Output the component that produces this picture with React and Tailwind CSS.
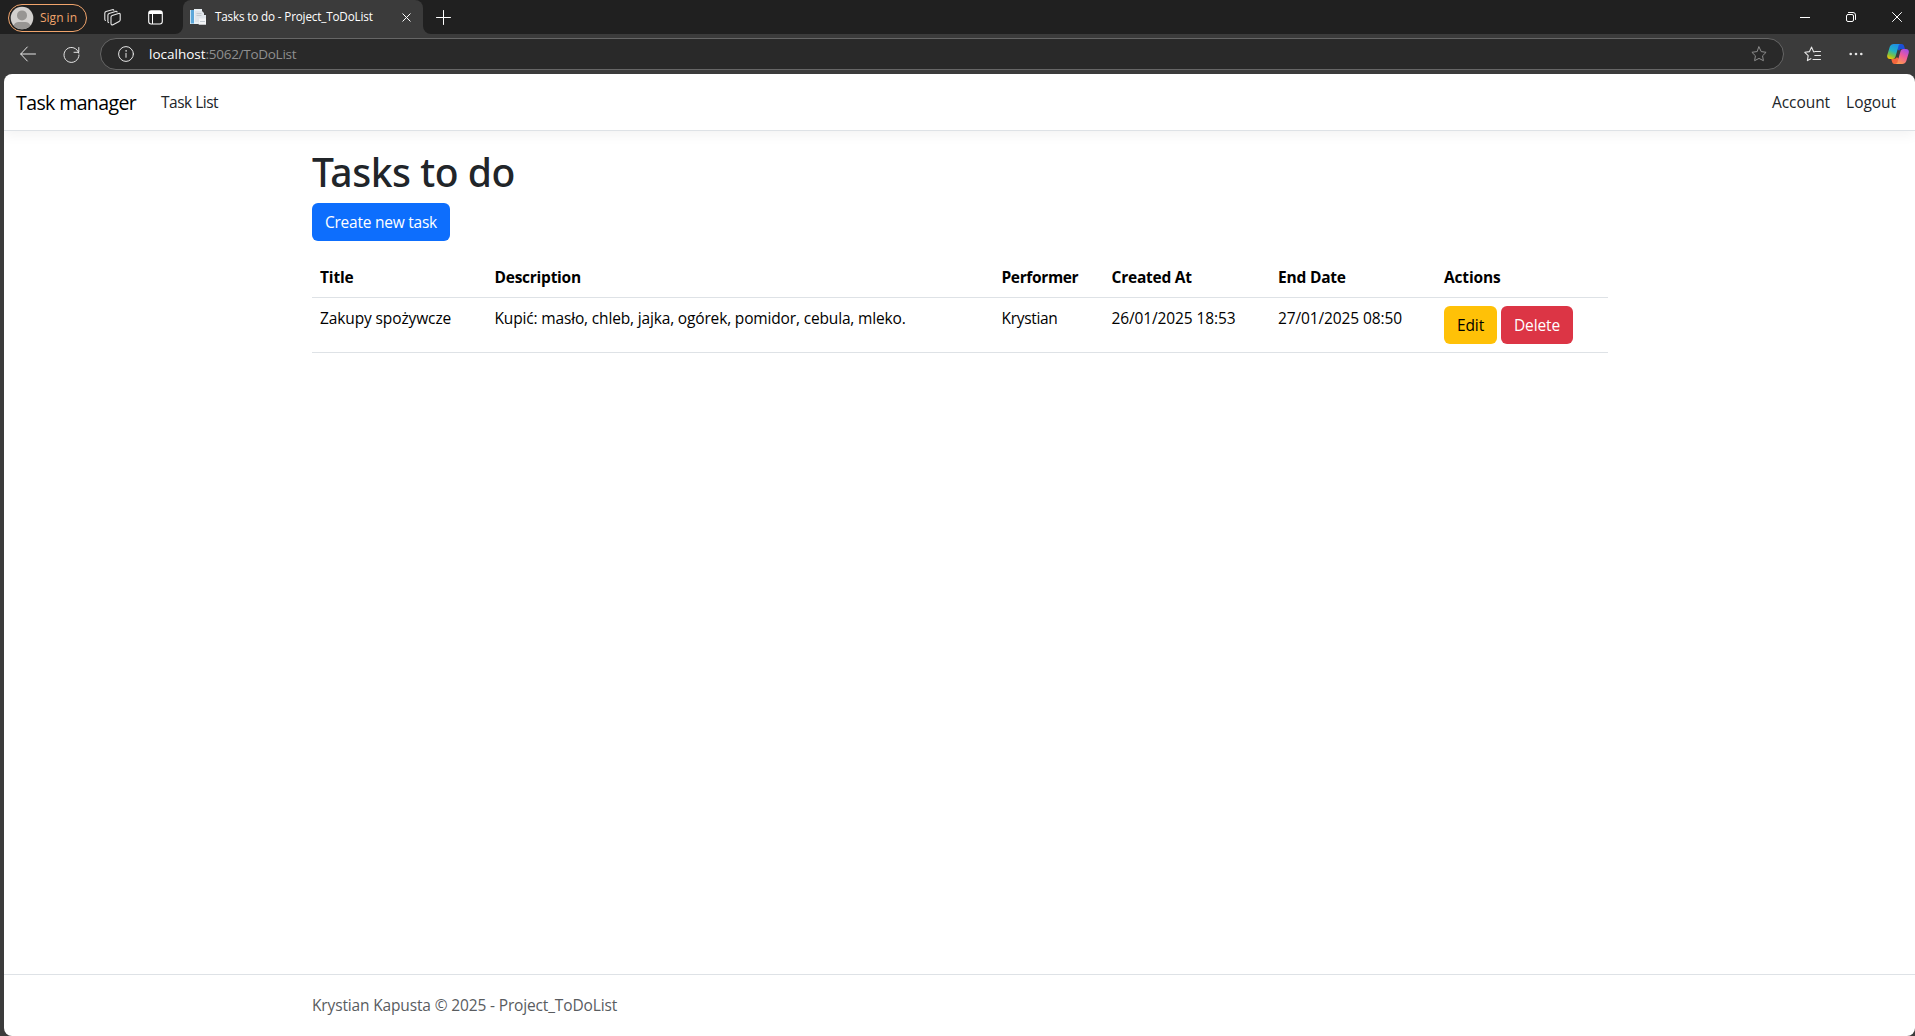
import React from "react";

const tasks = [
  {
    title: "Zakupy spożywcze",
    description: "Kupić: masło, chleb, jajka, ogórek, pomidor, cebula, mleko.",
    performer: "Krystian",
    createdAt: "26/01/2025 18:53",
    endDate: "27/01/2025 08:50",
  },
];

function Icon({ size = 16, className = "", children, sw = 1 }) {
  return (
    <svg width={size} height={size} viewBox={`0 0 ${size} ${size}`} fill="none" stroke="currentColor" strokeWidth={sw} strokeLinecap="round" strokeLinejoin="round" className={`block shrink-0 ${className}`}>
      {children}
    </svg>
  );
}

const STAR = "M8 .9l2.200 4.700 4.900.7-3.550 3.500.85 4.900L8 12.400l-4.400 2.300.85-4.900L.9 6.300l4.900-.7z";

function Avatar() {
  return (
    <svg width="24" height="24" viewBox="0 0 24 24" className="block shrink-0">
      <circle cx="12" cy="12" r="11.3" fill="#d2d0ce" />
      <circle cx="12" cy="9.4" r="5" fill="#979593" />
      <path d="M3.6 19.4c1.2-2.6 3-3.4 5-3.4h6.8c2 0 3.8.8 5 3.4A11.2 11.2 0 0 1 3.6 19.4z" fill="#979593" />
    </svg>
  );
}

function Favicon() {
  return (
    <svg width="16" height="16" viewBox="0 0 16 16" className="block shrink-0">
      <path d="M0 1h4V0h8v15H0z" fill="#e9f0f5" />
      <rect x="1" y="1" width="3" height="13.500" fill="#5ba7d9" />
      <rect x="0" y="1" width="1" height="13.500" fill="#c4dfef" />
      <path d="M5 2h7l2 2v2h2v9.500H8.500V13H5z" fill="#dfe5ea" />
      <path d="M6.500 4.500h5M6.500 6.500h5" stroke="#c0c8cf" strokeWidth="1" />
      <path d="M9 9.500h7v6H9z" fill="#f2f4f6" />
      <path d="M10 12.500h5" stroke="#c4cbd2" strokeWidth="1" />
    </svg>
  );
}

function Copilot() {
  return (
    <svg width="22" height="20" viewBox="0 0 22 20" className="block shrink-0">
      <defs>
        <linearGradient id="cpa" x1="0.6" y1="0" x2="0.2" y2="1">
          <stop offset="0" stopColor="#1f8fe8" />
          <stop offset="0.45" stopColor="#22b3c4" />
          <stop offset="0.75" stopColor="#7cc243" />
          <stop offset="1" stopColor="#f5c400" />
        </linearGradient>
        <linearGradient id="cpb" x1="0.8" y1="0" x2="0.3" y2="1">
          <stop offset="0" stopColor="#a34de8" />
          <stop offset="0.45" stopColor="#ee5a9c" />
          <stop offset="1" stopColor="#ff9a4d" />
        </linearGradient>
      </defs>
      <path d="M12 0h2.700c1.300 0 2 .8 2.400 2l.9 3.100h-3.500c-1.300 0-2 .7-2.300 1.700L10 5z" fill="#1b4fd6" />
      <path d="M10 20H7.500c-1.300 0-2-.8-2.400-2l-.9-3.200h3.300c1.300 0 2-.7 2.300-1.700L12 15z" fill="#f4663c" />
      <path d="M6.800 0h7c-1.300 0-1.900.9-2.300 2.200L8.700 12c-.6 2-1.300 2.900-3.200 2.900H3C.8 14.900-.3 13.300.3 11L2.700 3C3.400.9 4.800 0 6.800 0z" fill="url(#cpa)" />
      <path d="M15.200 20h-7c1.300 0 1.900-.9 2.300-2.200L13.300 8c.6-2 1.300-2.900 3.200-2.900H19c2.200 0 3.300 1.600 2.700 3.900l-2.400 8c-.7 2.100-2.100 3-4.100 3z" fill="url(#cpb)" />
    </svg>
  );
}

function TitleBar() {
  return (
    <div className="flex h-[34px] items-center bg-[#202020]">
      <div className="ml-2 mt-px flex h-7 w-[79px] items-center gap-[5px] rounded-full border border-[#f0a46c] pl-[1px] text-[#f0a46c]">
        <Avatar />
        <span className="ml-px text-[12px] leading-none">Sign in</span>
      </div>
      <Icon className="ml-[17px] text-[#e6e6e6]" size={17} sw={1.1}>
        <path d="M7 8.300c0-.9.400-1.400 1.200-1.700l6.300-2.100c1-.3 1.700.1 1.700 1.100v5.200c0 .8-.4 1.300-1.100 1.600L9 15.700c-1.200.5-2 0-2-1.200z" />
        <path d="M4.600 13.600c-.5-.2-.7-.6-.7-1.200V6.300c0-.9.400-1.400 1.200-1.700l6.400-2.200c.8-.2 1.400 0 1.600.6" />
        <path d="M1.500 11.400c-.5-.2-.7-.6-.7-1.200V4.200c0-.9.400-1.400 1.200-1.700L8.300.7c.8-.2 1.400 0 1.600.6" />
      </Icon>
      <Icon className="ml-[27px] text-white" size={15}>
        <rect x=".7" y=".7" width="13.600" height="13.300" rx="2.500" strokeWidth="1.100" />
        <path d="M1 2.500h13" strokeWidth="3" strokeLinecap="butt" />
        <path d="M4.500 4v9.500" />
      </Icon>
      <div className="ml-3 flex h-full items-end text-[#3b3b3b]">
        <svg width="8" height="8" className="block"><path d="M8 0v8H0a8 8 0 0 0 8-8z" fill="currentColor" /></svg>
        <div className="flex h-[34px] w-[240px] items-center rounded-t-lg bg-[#3b3b3b] pl-[7px] text-white">
          <Favicon />
          <span className="ml-[9px] w-[182px] whitespace-nowrap text-[11.7px] tracking-[-0.16px]">Tasks to do - Project_ToDoList</span>
          <Icon size={9} className="ml-[5px] mt-px"><path d="M.8.8l7.400 7.400M8.200.8L.8 8.200" /></Icon>
        </div>
        <svg width="8" height="8" className="block"><path d="M0 0v8h8a8 8 0 0 1-8-8z" fill="currentColor" /></svg>
      </div>
      <Icon size={15} className="ml-[5px] text-white"><path d="M7.500.5v14M.5 7.500h14" /></Icon>
      <div className="ml-auto mr-[13px] flex items-center text-white">
        <Icon size={10}><path d="M0 5.500h10" strokeLinecap="butt" /></Icon>
        <Icon size={10} className="ml-9"><rect x=".5" y="2.500" width="7" height="7" rx="1.500" /><path d="M2.500.5H7A2.500 2.500 0 0 1 9.500 3v4.500" /></Icon>
        <Icon size={10} className="ml-9"><path d="M.5.5l9 9M9.500.5l-9 9" /></Icon>
      </div>
    </div>
  );
}

function AddressBar() {
  return (
    <div className="flex h-10 items-center text-[#e6e6e6]">
      <Icon size={16} className="ml-5"><path d="M7.300 1L.7 8l6.600 7M.8 8h14.700" /></Icon>
      <Icon size={17} className="ml-[27px]"><path d="M15.800 7.200A7.500 7.500 0 1 0 16 9M15.800 1.500v4.800H11" /></Icon>
      <div className="ml-5 flex h-8 w-[1684px] items-center rounded-full border border-[#666] bg-[#292929] pl-[17px] pr-[16px]">
        <Icon size={16}><circle cx="8" cy="8" r="7.400" /><path d="M8 7.300v4" /><circle cx="8" cy="4.900" r=".4" fill="currentColor" strokeWidth=".6" /></Icon>
        <span className="ml-[15px] text-[13.5px] text-white">localhost</span>
        <span className="text-[13.5px] tracking-[-0.28px] text-[#8f8f8f]">:5062/ToDoList</span>
        <Icon size={16} className="ml-auto text-[#8c8c8c]"><path d={STAR} /></Icon>
      </div>
      <Icon size={17} className="ml-5" sw={1.1}>
        <path d="M10.200 5.900l-.6-.2L7.600 1.100 5.500 5.600l-4.700.7 3.400 3.400-.8 4.900 3.500-1.900M10.800 5.500h5.700M10.800 9.500h5.700M9 13.500h7.500" />
      </Icon>
      <svg width="14" height="4" viewBox="0 0 14 4" className="ml-7 block" fill="currentColor"><circle cx="1.700" cy="2" r="1.300" /><circle cx="7" cy="2" r="1.300" /><circle cx="12.300" cy="2" r="1.300" /></svg>
      <div className="ml-6"><Copilot /></div>
    </div>
  );
}

function Navbar() {
  return (
    <nav className="flex h-[57px] shrink-0 items-center border-b border-[#dee2e6] pl-3 pr-[19px] pt-[2px] shadow-[0_4px_12px_rgba(0,0,0,0.05)]">
      <a className="w-[121px] whitespace-nowrap text-[19.5px] tracking-[-0.6px] text-black">Task manager</a>
      <a className="ml-6 text-[15.5px] tracking-[-0.5px] text-[#212529]">Task List</a>
      <a className="ml-auto text-[15.5px] tracking-[-0.05px] text-[#212529]">Account</a>
      <a className="ml-4 text-[15.5px] tracking-[-0.05px] text-[#212529]">Logout</a>
    </nav>
  );
}

const cols = "grid grid-cols-[174.5px_507px_110px_166.5px_166px_172px] border-b border-[#dee2e6] text-black *:px-2 *:py-2 leading-6";

function TaskTable() {
  return (
    <div className="text-[15.5px]">
      <div className={`${cols} font-bold`}>
        <div className="tracking-[-0.15px]">Title</div>
        <div className="tracking-[-0.25px]">Description</div>
        <div className="tracking-[-0.36px]">Performer</div>
        <div className="tracking-[-0.23px]">Created At</div>
        <div className="tracking-[-0.2px]">End Date</div>
        <div className="tracking-[-0.15px]">Actions</div>
      </div>
      {tasks.map((t) => (
        <div key={t.title} className={cols}>
          <div className="tracking-[-0.12px]">{t.title}</div>
          <div className="tracking-[-0.16px]">{t.description}</div>
          <div className="tracking-[-0.32px]">{t.performer}</div>
          <div className="tracking-[-0.12px]">{t.createdAt}</div>
          <div className="tracking-[-0.12px]">{t.endDate}</div>
          <div className="flex gap-1">
            <button className="h-[38px] w-[53px] rounded-md bg-[#ffc107] tracking-[-0.1px] text-black">Edit</button>
            <button className="h-[38px] w-[72px] rounded-md bg-[#dc3545] tracking-[-0.1px] text-white">Delete</button>
          </div>
        </div>
      ))}
    </div>
  );
}

export default function App() {
  return (
    <div className="flex h-[1036px] w-[1915px] flex-col overflow-hidden bg-[#3b3b3b] font-['Open_Sans','Noto_Sans',sans-serif]">
      <TitleBar />
      <AddressBar />
      <div className="ml-1 flex flex-1 flex-col overflow-hidden rounded-lg bg-white">
        <Navbar />
        <main className="ml-[308px] w-[1296px] flex-1 pt-[17px]">
          <h1 className="mb-[7px] font-['Noto_Sans',sans-serif] text-[39px] font-medium leading-[48px] tracking-[-0.45px] text-[#212529]">Tasks to do</h1>
          <button className="mb-4 block h-[38px] w-[138px] rounded-md bg-[#0d6efd] pt-px text-[15.5px] tracking-[-0.24px] text-white">Create new task</button>
          <TaskTable />
        </main>
        <footer className="h-[62px] border-t border-[#dee2e6] pl-[308px] text-[15.5px] leading-[61px] tracking-[-0.15px] text-[#595c5f]">
          Krystian Kapusta © 2025 - Project_ToDoList
        </footer>
      </div>
    </div>
  );
}
